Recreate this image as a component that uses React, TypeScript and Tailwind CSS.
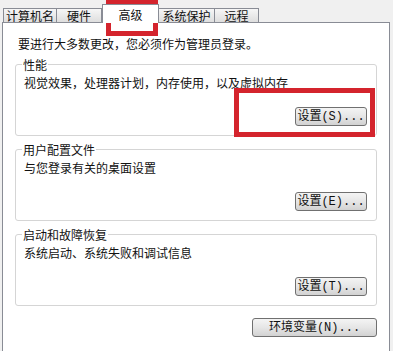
import React from 'react';

const tabs = [
  { label: '计算机名', w: 'w-[54px]' },
  { label: '硬件', w: 'w-[46px]' },
  { label: '高级', w: 'w-[57px]', active: true },
  { label: '系统保护', w: 'w-[57px]' },
  { label: '远程', w: 'w-[45px]' },
];

const groups = [
  { title: '性能', desc: '视觉效果，处理器计划，内存使用，以及虚拟内存', btn: '设置(S)...' },
  { title: '用户配置文件', desc: '与您登录有关的桌面设置', btn: '设置(E)...' },
  { title: '启动和故障恢复', desc: '系统启动、系统失败和调试信息', btn: '设置(T)...' },
];

const WinButton: React.FC<{ label: string; className?: string }> = ({ label, className = '' }) => (
  <button
    className={`h-[19px] rounded-[3px] border border-[#707070] bg-gradient-to-b from-[#f4f4f4] via-[#e6e6e6] to-[#d2d2d2] text-[12px] leading-none text-[#111] font-['Liberation_Mono','Noto_Sans_CJK_SC',monospace] flex items-center justify-center ${className}`}
  >
    {label}
  </button>
);

const App: React.FC = () => {
  return (
    <div className="relative w-[393px] h-[351px] overflow-hidden bg-[#f0f0f0] text-[#111] font-['Noto_Sans_CJK_SC',sans-serif] text-[12px]">
      {/* Tab strip */}
      <div className="flex items-end h-[22px] pl-[3px]">
        {tabs.map((t) =>
          t.active ? (
            <div
              key={t.label}
              className={`${t.w} relative z-10 -mb-px h-[19px] bg-white border border-b-0 border-[#898c95] flex items-start justify-center pt-[2px] leading-[15px]`}
            >
              {t.label}
            </div>
          ) : (
            <div
              key={t.label}
              className={`${t.w} h-[14px] bg-gradient-to-b from-[#f6f6f6] to-[#dedede] border border-b-0 border-[#898c95] -ml-px first:ml-0 flex items-center justify-center leading-[14px]`}
            >
              {t.label}
            </div>
          )
        )}
      </div>

      {/* Panel */}
      <div className="ml-[2px] w-[388px] h-[340px] bg-white border border-[#898c95] flex flex-col px-[12px]">
        <p className="pt-[13px] pl-[3px] leading-[15px]">要进行大多数更改，您必须作为管理员登录。</p>

        {groups.map((g, i) => (
          <div
            key={g.title}
            className={`relative ${i === 0 ? 'mt-[13px]' : 'mt-[13px]'} h-[72px] rounded-[3px] border border-[#d5d5d5] flex flex-col pl-[8px] pr-[9px]`}
          >
            <span className="absolute -top-[8px] left-[6px] bg-white px-[1px] leading-[15px]">{g.title}</span>
            <p className="pt-[10px] leading-[15px]">{g.desc}</p>
            <div className="mt-auto mb-[9px] flex justify-end">
              <WinButton label={g.btn} className="w-[72px]" />
            </div>
          </div>
        ))}

        <div className="mt-[12px] flex justify-end pr-[0px]">
          <WinButton label="环境变量(N)..." className="w-[125px]" />
        </div>
      </div>

      {/* Red highlight marks */}
      <div className="absolute left-[106px] top-0 w-[52px] h-[36px] border-[5px] border-[#d4242d]" />
      <div className="absolute left-[234px] top-[88px] w-[141px] h-[49px] border-[5px] border-[#d4242d]" />
    </div>
  );
};

export default App;
